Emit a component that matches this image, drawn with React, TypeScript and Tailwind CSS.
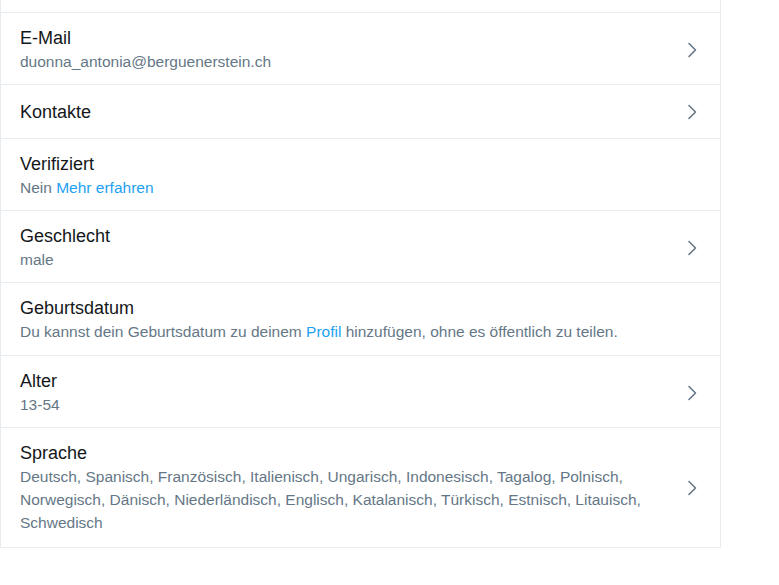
import React from 'react';

type Row = {
  title: string;
  sub?: React.ReactNode;
  arrow?: boolean;
  pad?: string;
};

const Chevron = () => (
  <svg width="10" height="16" viewBox="0 0 10 16" fill="none" className="shrink-0">
    <path d="M2 1.5 L8.5 8 L2 14.5" stroke="#657786" strokeWidth="1.6" strokeLinecap="round" strokeLinejoin="round" />
  </svg>
);

const rows: Row[] = [
  { title: 'E-Mail', sub: 'duonna_antonia@berguenerstein.ch', arrow: true },
  { title: 'Kontakte', arrow: true, pad: 'h-[54px]' },
  {
    title: 'Verifiziert',
    sub: (
      <>
        Nein <span className="text-[#1da1f2]">Mehr erfahren</span>
      </>
    ),
  },
  { title: 'Geschlecht', sub: 'male', arrow: true },
  {
    title: 'Geburtsdatum',
    sub: (
      <>
        Du kannst dein Geburtsdatum zu deinem <span className="text-[#1da1f2]">Profil</span> hinzufügen, ohne es
        öffentlich zu teilen.
      </>
    ),
    pad: 'pt-[13px] pb-[12px]',
  },
  { title: 'Alter', sub: '13-54', arrow: true },
  {
    title: 'Sprache',
    sub: 'Deutsch, Spanisch, Französisch, Italienisch, Ungarisch, Indonesisch, Tagalog, Polnisch, Norwegisch, Dänisch, Niederländisch, Englisch, Katalanisch, Türkisch, Estnisch, Litauisch, Schwedisch',
    arrow: true,
    pad: 'pt-[13px] pb-[13px]',
  },
];

export default function App() {
  return (
    <div className="min-h-[585px] bg-white font-['Liberation_Sans',sans-serif]">
      <div className="w-[721px] border-x border-b border-[#e6ecf0]">
        <div className="h-[12px]" />
        {rows.map((r) => (
          <div
            key={r.title}
            className={`flex items-center border-t border-[#e6ecf0] pl-[19px] pr-[23px] ${r.pad ?? 'pt-[13px] pb-[11px]'}`}
          >
            <div className="flex-1 pr-6">
              <div className="text-[18px] leading-6 text-[#14171a]">{r.title}</div>
              {r.sub && <div className="text-[15.5px] leading-[23px] text-[#657786]">{r.sub}</div>}
            </div>
            {r.arrow && <Chevron />}
          </div>
        ))}
      </div>
    </div>
  );
}
